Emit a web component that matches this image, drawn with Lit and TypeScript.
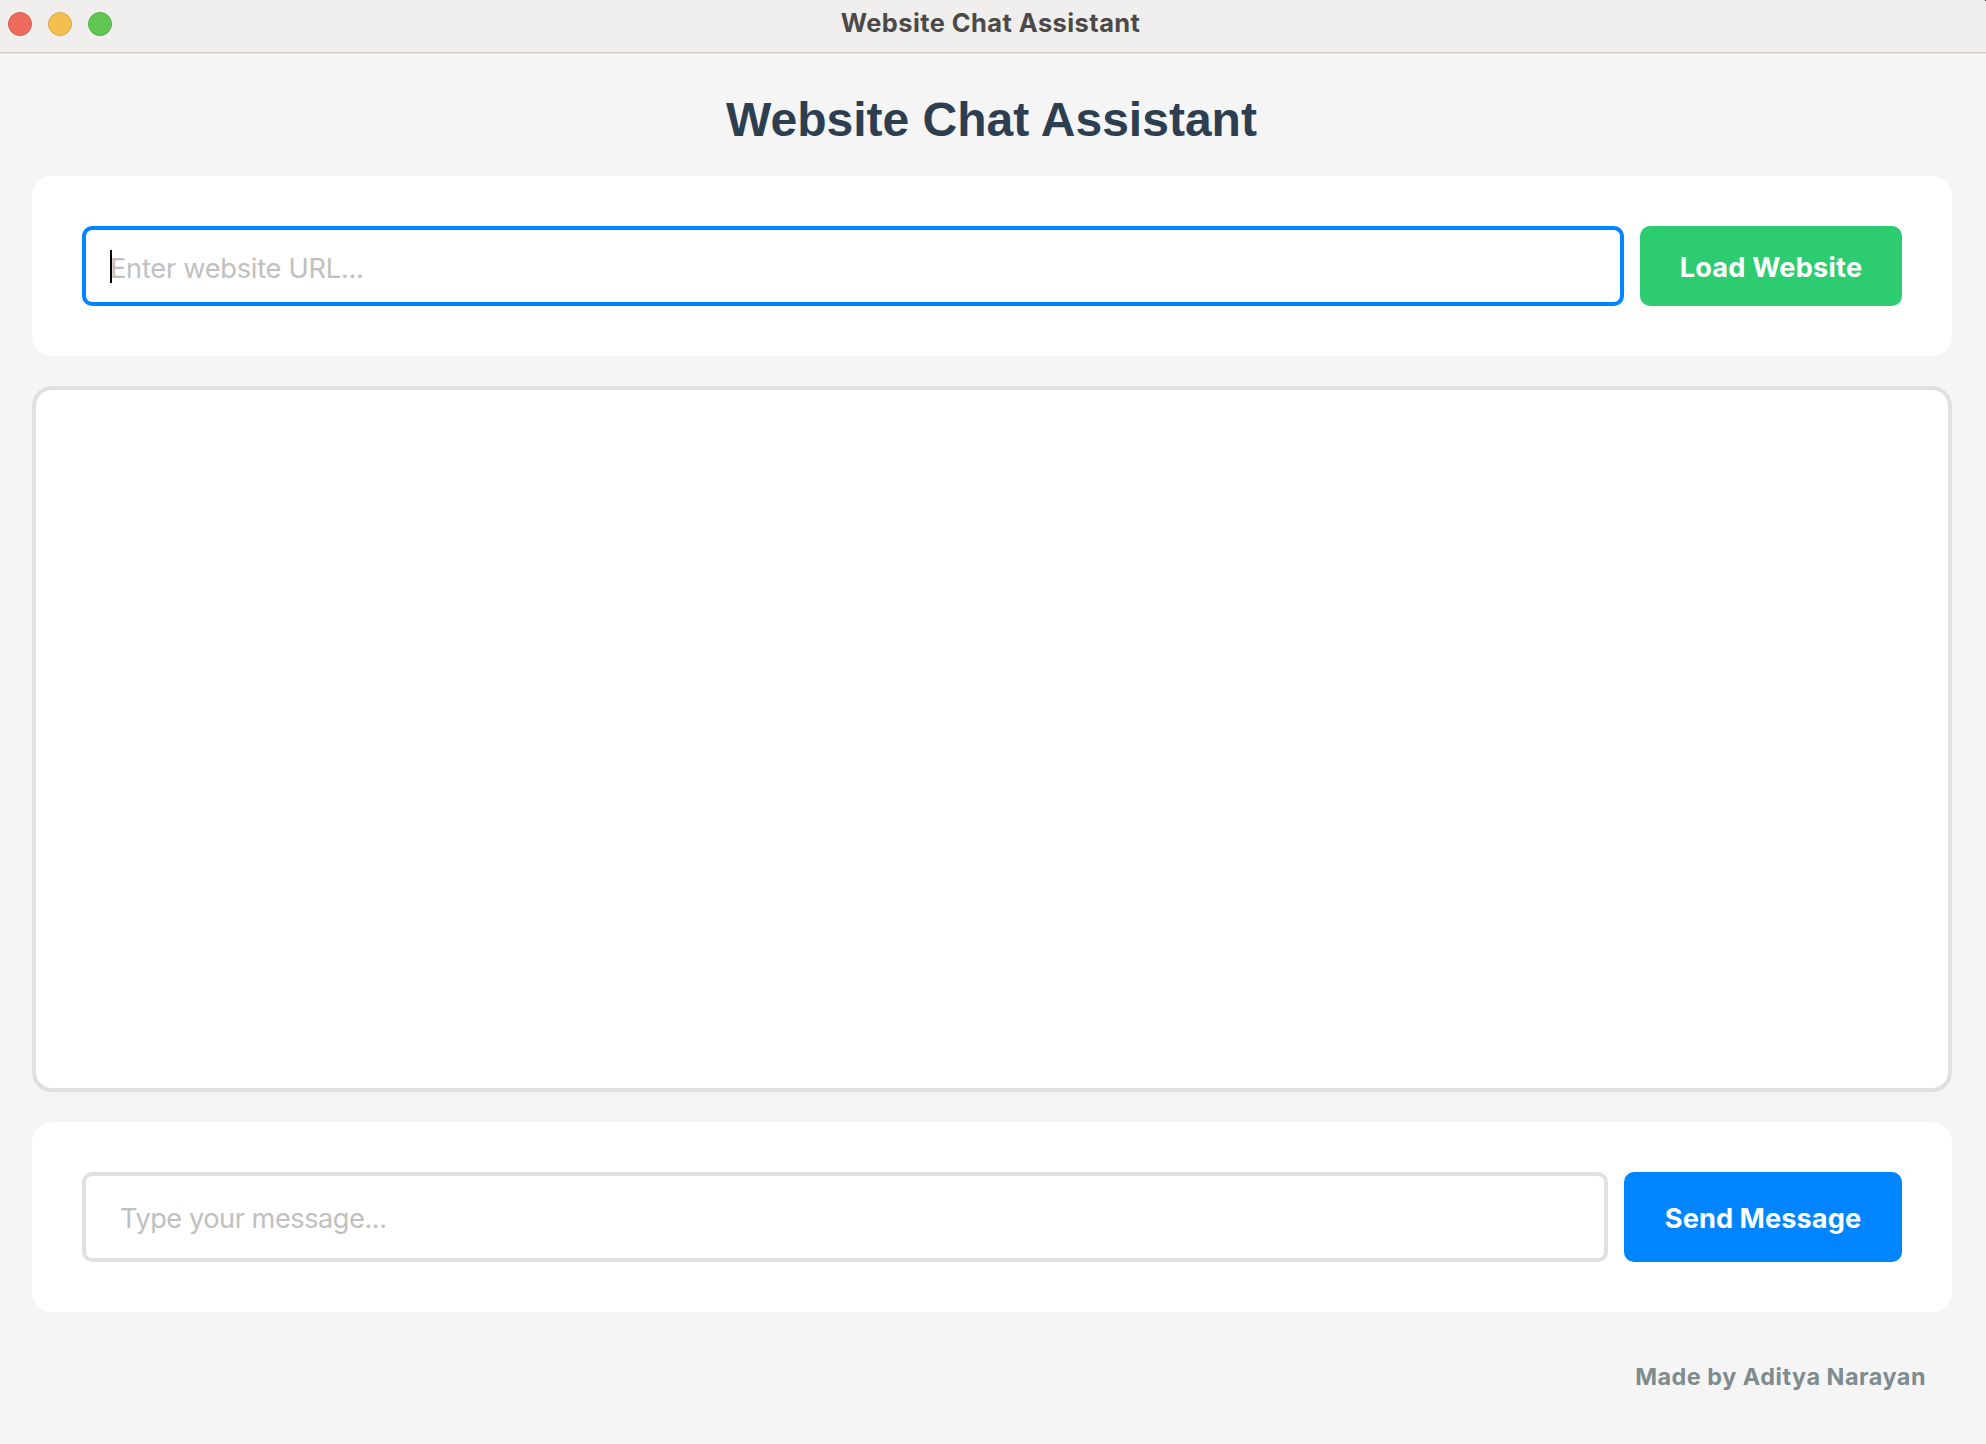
import { LitElement, html, css } from "lit";
import { customElement } from "lit/decorators.js";

@customElement("window-bar")
class WindowBar extends LitElement {
  static styles = css`
    :host {
      display: grid;
      grid-template-columns: 1fr auto 1fr;
      box-sizing: border-box;
      height: 54px;
      padding: 0 8px;
      background: linear-gradient(225deg, #222 0 1.4px, transparent 1.4px), #f0efed;
      border-bottom: 1px solid #e9e8e6;
      box-shadow: inset 0 -1px #cfcbc7;
      font-family: Inter, "Liberation Sans", sans-serif;
    }
    .lights {
      display: flex;
      gap: 16px;
      padding-top: 12px;
    }
    .light {
      box-sizing: border-box;
      width: 24px;
      height: 24px;
      border-radius: 50%;
      border: 1px solid;
    }
    .close {
      background: #ec6a5e;
      border-color: #d8594f;
    }
    .minimize {
      background: #f4bf4f;
      border-color: #dba94a;
    }
    .zoom {
      background: #61c554;
      border-color: #52ad44;
    }
    .title {
      padding-right: 5px;
      font-size: 25.4px;
      font-weight: 700;
      line-height: 46px;
      letter-spacing: 0.46px;
      color: #4b4a48;
      white-space: nowrap;
    }
  `;
  render() {
    return html`
      <div class="lights">
        <span class="light close"></span>
        <span class="light minimize"></span>
        <span class="light zoom"></span>
      </div>
      <div class="title">Website Chat Assistant</div>
    `;
  }
}

@customElement("app-root")
class AppRoot extends LitElement {
  static styles = css`
    :host {
      display: flex;
      flex-direction: column;
      height: 1444px;
      overflow: hidden;
      background: #f5f5f5;
      font-family: Inter, "Liberation Sans", sans-serif;
    }
    .content {
      display: flex;
      flex-direction: column;
      flex: 1;
      padding: 32px 34px 0 32px;
    }
    .heading {
      margin: 0 0 29px;
      padding: 7px 1px 0 0;
      font: 700 48px/54px "Liberation Sans", Arial, sans-serif;
      color: #2c3e50;
      text-align: center;
    }
    .panel {
      display: flex;
      gap: 16px;
      padding: 50px;
      border-radius: 20px;
      background: #fff;
    }
    .field {
      position: relative;
      display: flex;
      flex: 1;
    }
    .input {
      box-sizing: border-box;
      width: 100%;
      margin: 0;
      border: 4px solid #e0e0e0;
      border-radius: 10px;
      outline: none;
      background: #fff;
      font: 400 27.2px Inter, "Liberation Sans", sans-serif;
      color: #000;
    }
    .input::placeholder {
      color: #c0c0c0;
      opacity: 1;
    }
    .url {
      height: 80px;
      padding: 4px 24px 0;
      border-color: #0084ff;
      letter-spacing: -0.25px;
    }
    .message {
      height: 90px;
      padding: 2px 34px 0;
      letter-spacing: -0.47px;
    }
    .caret {
      position: absolute;
      left: 28px;
      top: 24px;
      width: 2px;
      height: 33px;
      background: #000;
    }
    .button {
      flex: none;
      margin: 0;
      padding: 2px 0 0;
      border: 0;
      border-radius: 10px;
      font: 700 27.2px Inter, "Liberation Sans", sans-serif;
      color: #fff;
      white-space: nowrap;
    }
    .load {
      width: 262px;
      background: #2ecc71;
      letter-spacing: 0.2px;
    }
    .send {
      width: 278px;
      background: #0084ff;
      letter-spacing: 0.06px;
    }
    .chat {
      box-sizing: border-box;
      height: 706px;
      margin: 30px 0;
      border: 4px solid #e0e0e0;
      border-radius: 20px;
      background: #fff;
    }
    .credit {
      padding: 44px 26px 0 0;
      font-size: 23.4px;
      font-weight: 700;
      line-height: 41px;
      letter-spacing: 0.52px;
      color: #7f8c8d;
      text-align: right;
    }
  `;
  render() {
    return html`
      <window-bar></window-bar>
      <main class="content">
        <h1 class="heading">Website Chat Assistant</h1>
        <section class="panel">
          <div class="field">
            <input class="input url" placeholder="Enter website URL..." />
            <span class="caret"></span>
          </div>
          <button class="button load">Load Website</button>
        </section>
        <section class="chat"></section>
        <section class="panel">
          <div class="field">
            <input class="input message" placeholder="Type your message..." />
          </div>
          <button class="button send">Send Message</button>
        </section>
        <footer class="credit">Made by Aditya Narayan</footer>
      </main>
    `;
  }
}
